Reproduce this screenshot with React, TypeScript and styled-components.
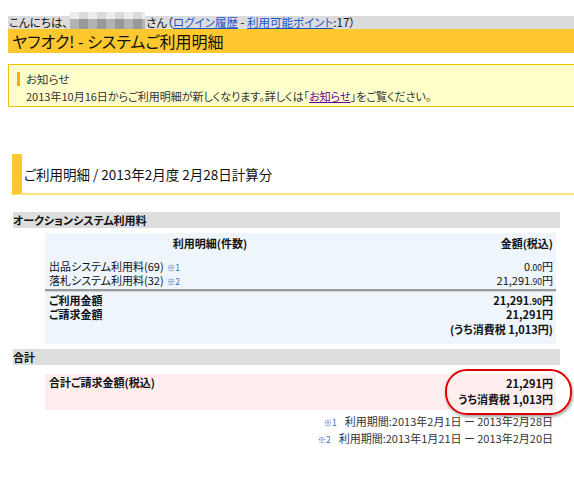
import React from "react";
import styled, { createGlobalStyle } from "styled-components";

const GlobalStyle = createGlobalStyle`
  html, body {
    margin: 0;
    padding: 0;
    background: #ffffff;
  }
  body {
    font-family: "Noto Sans CJK JP", "Liberation Sans", sans-serif;
    font-size: 11px;
    line-height: 14px;
    color: #222;
    font-feature-settings: "palt";
  }
`;

const Page = styled.div`
  width: 100%;
  padding-left: 8px;
  box-sizing: border-box;
  padding-bottom: 30px;
`;

const Greeting = styled.div`
  margin-top: 16px;
  height: 13px;
  background: #dcdcdc;
  display: flex;
  align-items: flex-end;
  padding-left: 1px;
  font-size: 11.5px;
  color: #111;
`;

const GreetText = styled.span`
  line-height: 13px;
  white-space: nowrap;
`;

const Mosaic = styled.span`
  display: block;
  width: 75px;
  height: 17px;
  margin: 0 1px 0 2px;
  background:
    repeating-linear-gradient(
      to right,
      rgba(255, 255, 255, 0.18) 0 9px,
      rgba(0, 0, 0, 0.06) 9px 18px
    ),
    linear-gradient(to bottom, #e8e8e8 0 42%, #a2a2a2 42% 100%);
`;

const TopLink = styled.a`
  color: #1a56c8;
  text-decoration: underline;
  line-height: 13px;
`;

const TitleBar = styled.div`
  height: 24px;
  background: #ffc82e;
  font-size: 16px;
  line-height: 24px;
  padding-left: 4px;
  color: #111;
  white-space: nowrap;
`;

const Notice = styled.div`
  margin-top: 11px;
  height: 43px;
  box-sizing: border-box;
  border: 1px solid #f2c400;
  border-right: none;
  background: #ffffcc;
  padding: 5px 0 0 8px;
  color: #333;
`;

const NoticeHead = styled.div`
  border-left: 3px solid #f0b000;
  padding-left: 6px;
  line-height: 14px;
  margin-top: 2px;
  font-size: 11.5px;
`;

const NoticeBody = styled.div`
  margin: 3px 0 0 9px;
  line-height: 14px;
  white-space: nowrap;
`;

const NoticeLink = styled.a`
  color: #660099;
  text-decoration: underline;
`;

const SectionTitle = styled.div`
  margin-top: 47px;
  margin-left: 4px;
  height: 41px;
  box-sizing: border-box;
  border-left: 10px solid #ffc82e;
  border-bottom: 2px solid #ffe27a;
  display: flex;
  align-items: center;
  padding: 0 0 0 2px;
  font-size: 13.5px;
  color: #111;
  white-space: nowrap;
`;

const GrayBar = styled.div<{ $top: number }>`
  margin-top: ${(p) => p.$top}px;
  margin-left: 5px;
  margin-right: 14px;
  height: 16px;
  line-height: 16px;
  background: #dddddd;
  font-weight: bold;
  color: #111;
`;

const DetailBox = styled.div`
  margin: 5px 18px 0 37px;
  background: #eef5fb;
  padding: 1px 0 8px;
`;

const Row = styled.div<{ $h?: number; $bold?: boolean }>`
  display: flex;
  align-items: center;
  height: ${(p) => p.$h ?? 14}px;
  line-height: 14px;
  font-weight: ${(p) => (p.$bold ? "bold" : "normal")};
  color: #111;
`;

const Label = styled.div<{ $center?: boolean }>`
  width: 330px;
  padding-left: ${(p) => (p.$center ? 0 : 4)}px;
  text-align: ${(p) => (p.$center ? "center" : "left")};
  box-sizing: border-box;
  white-space: nowrap;
`;

const Amount = styled.div`
  flex: 1;
  text-align: right;
  padding-right: 3px;
  white-space: nowrap;
`;

const Note = styled.span`
  color: #3a6fc4;
  font-size: 8.5px;
  margin-left: 3px;
`;

const Small = styled.span`
  font-size: 8.5px;
`;

const Spacer = styled.div<{ $h: number }>`
  height: ${(p) => p.$h}px;
`;

const Divider = styled.div`
  margin: 2px 0 1px;
  border-top: 2px solid #9a9a9a;
  border-bottom: 1px solid #d4d4d4;
`;

const TotalBox = styled.div`
  position: relative;
  margin: 9px 18px 0 37px;
  height: 36px;
  background: #fdeded;
  display: flex;
  justify-content: space-between;
  font-weight: bold;
  color: #111;
`;

const TotalLabel = styled.div`
  padding: 1px 0 0 4px;
  line-height: 14px;
`;

const TotalValues = styled.div`
  text-align: right;
  padding: 1px 3px 0 0;
  line-height: 16px;
`;

const Circle = styled.div`
  position: absolute;
  left: 400px;
  top: -5px;
  width: 123px;
  height: 42px;
  border: 2px solid #e00000;
  border-radius: 22px;
  box-shadow: 1px 2px 3px rgba(0, 0, 0, 0.35);
  pointer-events: none;
`;

const Footnotes = styled.div`
  margin: 3px 21px 0 0;
  text-align: right;
  color: #333;
`;

const FootLine = styled.div`
  line-height: 16px;
  white-space: nowrap;
`;

const FootMark = styled.span`
  color: #3a6fc4;
  font-size: 8.5px;
  margin-right: 8px;
`;

export default function App() {
  return (
    <Page>
      <GlobalStyle />
      <Greeting>
        <GreetText>こんにちは、</GreetText>
        <Mosaic />
        <GreetText>
          さん（<TopLink href="#">ログイン履歴</TopLink> - <TopLink href="#">利用可能ポイント</TopLink>:17）
        </GreetText>
      </Greeting>
      <TitleBar>ヤフオク! - システムご利用明細</TitleBar>

      <Notice>
        <NoticeHead>お知らせ</NoticeHead>
        <NoticeBody>
          2013年10月16日からご利用明細が新しくなります。詳しくは「<NoticeLink href="#">お知らせ</NoticeLink>」をご覧ください。
        </NoticeBody>
      </Notice>

      <SectionTitle>ご利用明細 / 2013年2月度 2月28日計算分</SectionTitle>

      <GrayBar $top={17}>オークションシステム利用料</GrayBar>
      <DetailBox>
        <Row $h={18} $bold>
          <Label $center>利用明細(件数)</Label>
          <Amount>金額(税込)</Amount>
        </Row>
        <Spacer $h={7} />
        <Row>
          <Label>
            出品システム利用料(69)<Note>※1</Note>
          </Label>
          <Amount>
            0<Small>.00</Small>円
          </Amount>
        </Row>
        <Row>
          <Label>
            落札システム利用料(32)<Note>※2</Note>
          </Label>
          <Amount>
            21,291<Small>.90</Small>円
          </Amount>
        </Row>
        <Divider />
        <Row $bold>
          <Label>ご利用金額</Label>
          <Amount>
            21,291<Small>.90</Small>円
          </Amount>
        </Row>
        <Row $bold>
          <Label>ご請求金額</Label>
          <Amount>21,291円</Amount>
        </Row>
        <Row $bold $h={15}>
          <Label />
          <Amount>(うち消費税 1,013円)</Amount>
        </Row>
      </DetailBox>

      <GrayBar $top={5}>合計</GrayBar>
      <TotalBox>
        <TotalLabel>合計ご請求金額(税込)</TotalLabel>
        <TotalValues>
          <div>21,291円</div>
          <div>うち消費税 1,013円</div>
        </TotalValues>
        <Circle />
      </TotalBox>

      <Footnotes>
        <FootLine>
          <FootMark>※1</FootMark>利用期間:2013年2月1日 ー 2013年2月28日
        </FootLine>
        <FootLine>
          <FootMark>※2</FootMark>利用期間:2013年1月21日 ー 2013年2月20日
        </FootLine>
      </Footnotes>
    </Page>
  );
}
